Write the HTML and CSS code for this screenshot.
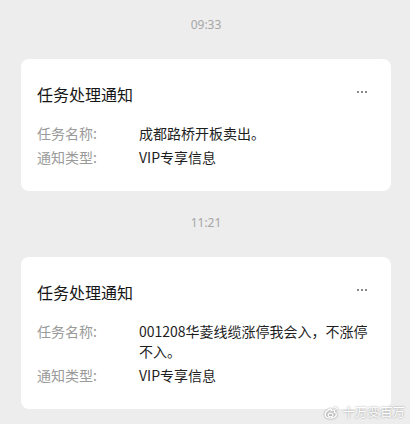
FILE: index.html
```html
<!DOCTYPE html>
<html lang="zh-CN">
<head>
  <meta charset="UTF-8" />
  <meta name="viewport" content="width=device-width, initial-scale=1" />
  <title>任务处理通知</title>
  <link rel="stylesheet" href="styles.css">
</head>
<body>

  <main class="chat">
    <div class="hora">09:33</div>
    <section class="card">
      <header class="card-head">
        <h2>任务处理通知</h2>
        <span class="mais" aria-label="更多"><i></i><i></i><i></i></span>
      </header>
      <dl class="linhas">
        <div class="linha">
          <dt>任务名称:</dt>
          <dd>成都路桥开板卖出。</dd>
        </div>
        <div class="linha">
          <dt>通知类型:</dt>
          <dd>VIP专享信息</dd>
        </div>
      </dl>
    </section>

    <div class="hora">11:21</div>
    <section class="card">
      <header class="card-head">
        <h2>任务处理通知</h2>
        <span class="mais" aria-label="更多"><i></i><i></i><i></i></span>
      </header>
      <dl class="linhas">
        <div class="linha">
          <dt>任务名称:</dt>
          <dd>001208华菱线缆涨停我会入，不涨停不入。</dd>
        </div>
        <div class="linha">
          <dt>通知类型:</dt>
          <dd>VIP专享信息</dd>
        </div>
      </dl>
    </section>
  </main>

  <div class="marca">
    <svg width="15" height="13" viewBox="0 0 15 13" aria-hidden="true">
      <path d="M6.2 3.2C3.4 4.4 1 6.6 1.3 8.8c.3 2.2 3 3.5 6 3.2 3-.3 5.2-2 5-4-.1-1.2-1.200-1.600-2-1.700.4-.9.5-2-.6-2.2-1-.2-2.3.4-2.3.4s.4-1.4-1.2-1.3z" fill="none" stroke="#fff" stroke-width="1.3"/>
      <ellipse cx="6.6" cy="9" rx="2.4" ry="1.8" fill="none" stroke="#fff" stroke-width="1.1"/>
      <path d="M10.5 1.2a2.6 2.6 0 0 1 2.6 2.6M10.4 2.8a1.1 1.1 0 0 1 1.1 1.1" fill="none" stroke="#fff" stroke-width="1.1"/>
    </svg>
    <span>十万变百万</span>
  </div>

</body>
</html>
```

FILE: styles.css
```css
body {
  margin: 0;
  background: #ededed;
  font-family: "Noto Sans CJK SC", "Noto Sans", sans-serif;
  color: #1a1a1a;
  min-height: 100vh;
}

.chat {
  display: flex;
  flex-direction: column;
  padding: 16px 19px 0 21px;
}

.hora {
  text-align: center;
  font-family: "Noto Sans", "Noto Sans CJK SC", sans-serif;
  font-size: 12px;
  line-height: 18px;
  color: #a6a6a6;
  margin-bottom: 25px;
}
.card + .hora {
  margin-top: 23px;
}

.card {
  background: #fff;
  border-radius: 8px;
  padding: 24px 16px 24px 16px;
}

.card-head {
  display: flex;
  justify-content: space-between;
  align-items: center;
  margin-bottom: 18px;
}
.card-head h2 {
  margin: 0;
  font-size: 16px;
  line-height: 22px;
  font-weight: 400;
  color: #161616;
}

.mais {
  display: flex;
  gap: 2px;
  margin-right: 8px;
  margin-top: -5px;
}
.mais i {
  width: 2px;
  height: 2px;
  background: #8a8a8a;
}

.linhas {
  margin: 0;
  display: flex;
  flex-direction: column;
  gap: 4px;
}
.linha {
  display: flex;
  font-size: 14px;
  line-height: 20px;
}
.linha dt {
  width: 102px;
  flex-shrink: 0;
  color: #9a9a9a;
}
.linha dd {
  margin: 0;
  color: #1e1e1e;
}

.marca {
  position: absolute;
  right: 5px;
  top: 404px;
  display: flex;
  align-items: center;
  gap: 3px;
  color: #fff;
  font-size: 12.5px;
  line-height: 16px;
  text-shadow: 0 0 2px rgba(0,0,0,0.45);
}
.marca svg {
  filter: drop-shadow(0 0 1px rgba(0,0,0,0.45));
}
```
